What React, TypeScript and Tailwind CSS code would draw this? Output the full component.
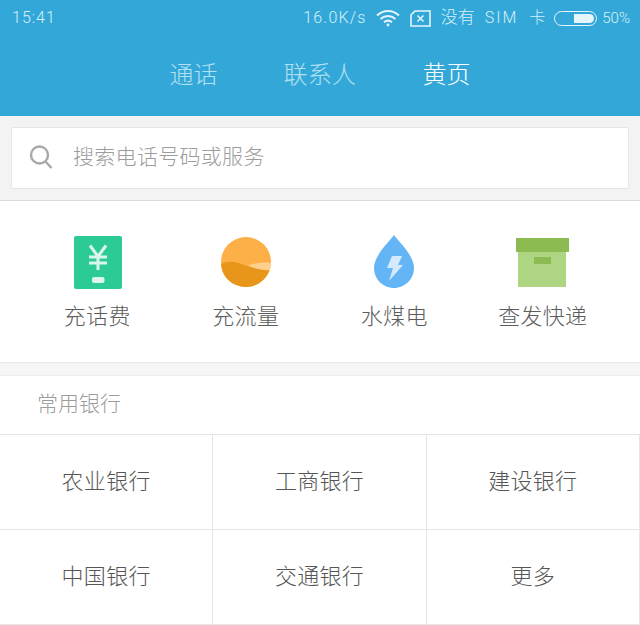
const cjk = "font-['Roboto','Noto_Sans_CJK_SC',sans-serif] font-light";

const services = [
  { label: "充话费", icon: <PhoneBill /> },
  { label: "充流量", icon: <DataPlan /> },
  { label: "水煤电", icon: <Utility /> },
  { label: "查发快递", icon: <Parcel /> },
];

const banks = ["农业银行", "工商银行", "建设银行", "中国银行", "交通银行", "更多"];

function PhoneBill() {
  return (
    <svg className="ml-[1px]" width="48" height="53" viewBox="0 0 48 53">
      <rect width="48" height="53" rx="2" fill="#2ccb96" />
      <path d="M16 9.500l8 11 8-11M15 21h18M15 27h18M24 20v14" fill="none" stroke="#d9f7ec" strokeWidth="3" />
      <rect x="18" y="41" width="12.500" height="6" rx="2" fill="#d9f7ec" />
    </svg>
  );
}

function DataPlan() {
  return (
    <svg className="mt-[1px]" width="50" height="50" viewBox="0 0 50 50">
      <circle cx="25" cy="25" r="25" fill="#feb048" />
      <path d="M0.2 27C5 24 12 24 19 26.500C27 29.500 36 33 48.500 33.500C44.500 43 35.500 50 25 50C11 50 0 39 0.2 27Z" fill="#e8951c" />
      <path d="M27 28.500C33 26 42 25 50 26C50 28 49.500 30.500 48.700 33C40 33 33 31 27 28.500Z" fill="#fdd08e" />
    </svg>
  );
}

function Utility() {
  return (
    <svg className="-mt-[1px]" width="40" height="53" viewBox="0 0 40 53">
      <path d="M20 0C24 6 40 20 40 33C40 44 31 53 20 53C9 53 0 44 0 33C0 20 16 6 20 0Z" fill="#64b5f6" />
      <path d="M18 21h10l-4 9h5L15 46l4-13h-6Z" fill="#d5eafc" />
    </svg>
  );
}

function Parcel() {
  return (
    <svg className="mt-[2px]" width="53" height="49" viewBox="0 0 53 49">
      <rect x="2" y="14" width="48" height="35" fill="#aed581" />
      <rect width="53" height="14" fill="#8bbb51" />
      <rect x="18" y="19" width="17" height="7" fill="#8bbb51" />
    </svg>
  );
}

function StatusBar() {
  return (
    <div className={`flex h-[36px] items-center justify-between pl-[12px] pr-[10px] text-[16px] text-[#d6eff9] ${cjk}`}>
      <span className="tracking-[1px]">15:41</span>
      <div className="flex items-center">
        <span className="tracking-[1.2px]">16.0K/s</span>
        {/* wifi */}
        <svg className="ml-[9px]" width="24" height="18" viewBox="0 0 24 18" fill="none" stroke="#e6f5fb" strokeWidth="2">
          <path d="M1 6.500C7.500 0.500 16.500 0.500 23 6.500M4.500 10C9 6 15 6 19.500 10M8 13.200C10.500 11.200 13.500 11.200 16 13.200" />
          <circle cx="12" cy="16" r="1.400" fill="#e6f5fb" stroke="none" />
        </svg>
        {/* sim card with a cross */}
        <svg className="ml-[10px]" width="21" height="17" viewBox="0 0 21 17" fill="none" stroke="#e6f5fb" strokeWidth="1.600">
          <path d="M5 1h15v15H1V5Z" />
          <path d="M7.500 5.500l6 6M13.500 5.500l-6 6" />
        </svg>
        <span className="ml-[10px] text-[17px]">没有</span>
        <span className="ml-[10px] tracking-[2px]">SIM</span>
        <span className="ml-[11px]">卡</span>
        {/* battery */}
        <div className="ml-[9px] flex h-[15px] w-[43px] justify-end rounded-full border border-[#e6f5fb] p-[2px]">
          <div className="w-[20px] rounded-r-full bg-[#e6f5fb]" />
        </div>
        <span className="ml-[5px] text-[15px]">50%</span>
      </div>
    </div>
  );
}

function Tabs() {
  return (
    <div className={`flex h-[80px] items-center justify-center pb-[3px] text-[24px] ${cjk}`}>
      <span className="w-[48px] text-[#b2e0f2]">通话</span>
      <span className="ml-[66px] w-[74px] tracking-[0.300px] text-[#b2e0f2]">联系人</span>
      <span className="ml-[65px] w-[48px] text-white">黄页</span>
    </div>
  );
}

function SearchBar() {
  return (
    <div className="border-b border-[#dcdcdc] bg-[#f3f3f3] p-[11px]">
      <div className="flex h-[62px] items-center rounded-[2px] border border-[#e6e6e6] bg-white pb-[3px] pl-[17px]">
        <svg width="24" height="26" viewBox="0 0 24 26" fill="none" stroke="#a8a8a8" strokeWidth="2.400">
          <circle cx="10.500" cy="11" r="8.500" />
          <path d="M16.500 17.500l6 6.500" />
        </svg>
        <span className={`ml-[20px] pt-[3px] text-[21px] tracking-[0.300px] text-[#9c9c9c] ${cjk}`}>搜索电话号码或服务</span>
      </div>
    </div>
  );
}

export default function App() {
  return (
    <div className={`h-[625px] w-[640px] overflow-hidden bg-white ${cjk}`}>
      <div className="bg-[#33a8d8]">
        <StatusBar />
        <Tabs />
      </div>
      <SearchBar />

      <div className="grid h-[162px] grid-cols-4 border-b border-[#e8e8e8] px-[23px]">
        {services.map((s) => (
          <div key={s.label} className="flex flex-col items-center pt-[35px]">
            <div className="flex h-[54px] items-start">{s.icon}</div>
            <span className="mt-[11px] text-[22px] leading-[32px] tracking-[0.300px] text-[#5c5c5c]">{s.label}</span>
          </div>
        ))}
      </div>

      <div className="h-[13px] border-b border-[#ececec] bg-[#f6f6f6]" />

      <div className="flex h-[59px] items-center border-b border-[#e4e4e4] pl-[37px] text-[21px] text-[#9c9c9c]">常用银行</div>

      <div className="grid grid-cols-3">
        {banks.map((b) => (
          <div
            key={b}
            className="flex h-[95px] items-center justify-center border-r border-b border-[#e6e6e6] pb-[2px] text-[22px] tracking-[0.300px] text-[#565656]"
          >
            {b}
          </div>
        ))}
      </div>
    </div>
  );
}
